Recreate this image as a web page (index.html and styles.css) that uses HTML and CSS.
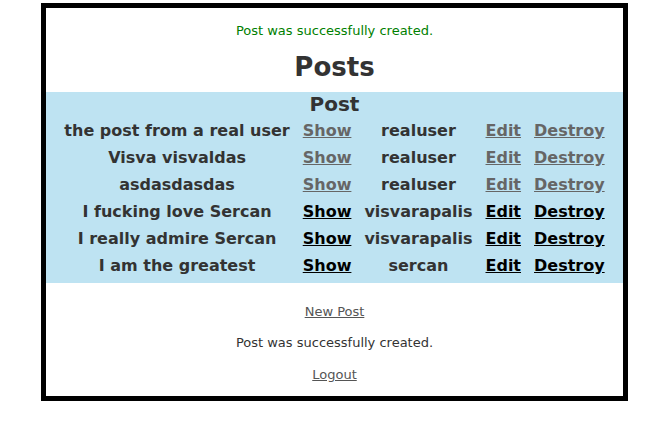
FILE: index.html
```html
<!DOCTYPE html>
<html>
<head>
<meta charset="utf-8">
<title>Posts</title>
<link rel="stylesheet" href="styles.css">
</head>
<body>
<div class="frame">
  <p class="notice">Post was successfully created.</p>
  <h1 class="title">Posts</h1>
  <div class="panel">
    <table class="posts">
      <thead>
        <tr><th colspan="5" class="head">Post</th></tr>
      </thead>
      <tbody>
        <tr>
          <td class="name">the post from a real user</td>
          <td><a class="link visited" href="#">Show</a></td>
          <td class="user">realuser</td>
          <td><a class="link visited" href="#">Edit</a></td>
          <td><a class="link visited" href="#">Destroy</a></td>
        </tr>
        <tr>
          <td class="name">Visva visvaldas</td>
          <td><a class="link visited" href="#">Show</a></td>
          <td class="user">realuser</td>
          <td><a class="link visited" href="#">Edit</a></td>
          <td><a class="link visited" href="#">Destroy</a></td>
        </tr>
        <tr>
          <td class="name">asdasdasdas</td>
          <td><a class="link visited" href="#">Show</a></td>
          <td class="user">realuser</td>
          <td><a class="link visited" href="#">Edit</a></td>
          <td><a class="link visited" href="#">Destroy</a></td>
        </tr>
        <tr>
          <td class="name">I fucking love Sercan</td>
          <td><a class="link" href="#">Show</a></td>
          <td class="user">visvarapalis</td>
          <td><a class="link" href="#">Edit</a></td>
          <td><a class="link" href="#">Destroy</a></td>
        </tr>
        <tr>
          <td class="name">I really admire Sercan</td>
          <td><a class="link" href="#">Show</a></td>
          <td class="user">visvarapalis</td>
          <td><a class="link" href="#">Edit</a></td>
          <td><a class="link" href="#">Destroy</a></td>
        </tr>
        <tr>
          <td class="name">I am the greatest</td>
          <td><a class="link" href="#">Show</a></td>
          <td class="user">sercan</td>
          <td><a class="link" href="#">Edit</a></td>
          <td><a class="link" href="#">Destroy</a></td>
        </tr>
      </tbody>
    </table>
  </div>
  <p class="line first"><a class="plain" href="#">New Post</a></p>
  <p class="line msg">Post was successfully created.</p>
  <p class="line last"><a class="plain" href="#">Logout</a></p>
</div>
</body>
</html>
```

FILE: styles.css
```css
html, body {
  margin: 0;
  padding: 0;
  background: #fff;
}
body {
  font-family: "DejaVu Sans", Verdana, sans-serif;
  color: #333;
}
.frame {
  box-sizing: border-box;
  width: 587px;
  margin: 3px auto 0;
  border: 5px solid #000;
  text-align: center;
  padding: 15px 0 13px;
}
.notice {
  margin: 0;
  font-size: 13px;
  line-height: 16px;
  color: #008000;
}
.title {
  margin: 13px 0 10px;
  font-size: 26px;
  line-height: 30px;
  font-weight: bold;
  color: #333;
}
.panel {
  background: #bee3f2;
  padding-bottom: 4px;
}
.posts {
  margin: 0 auto;
  border-collapse: collapse;
  font-size: 16px;
  font-weight: bold;
  color: #333;
}
.posts th.head {
  font-size: 20px;
  line-height: 24px;
  height: 25px;
  padding: 0;
  vertical-align: top;
}
.posts td {
  height: 27px;
  line-height: 19px;
  padding: 0 6.5px;
  text-align: center;
  vertical-align: middle;
}
.link {
  color: #000;
  text-decoration: underline;
}
.link.visited {
  color: #666;
}
.line {
  margin: 0;
  font-size: 13px;
  line-height: 16px;
}
.line.first {
  margin-top: 21px;
}
.line.msg {
  margin-top: 15px;
}
.line.last {
  margin-top: 16px;
}
.plain {
  color: #555;
  text-decoration: underline;
}
```
